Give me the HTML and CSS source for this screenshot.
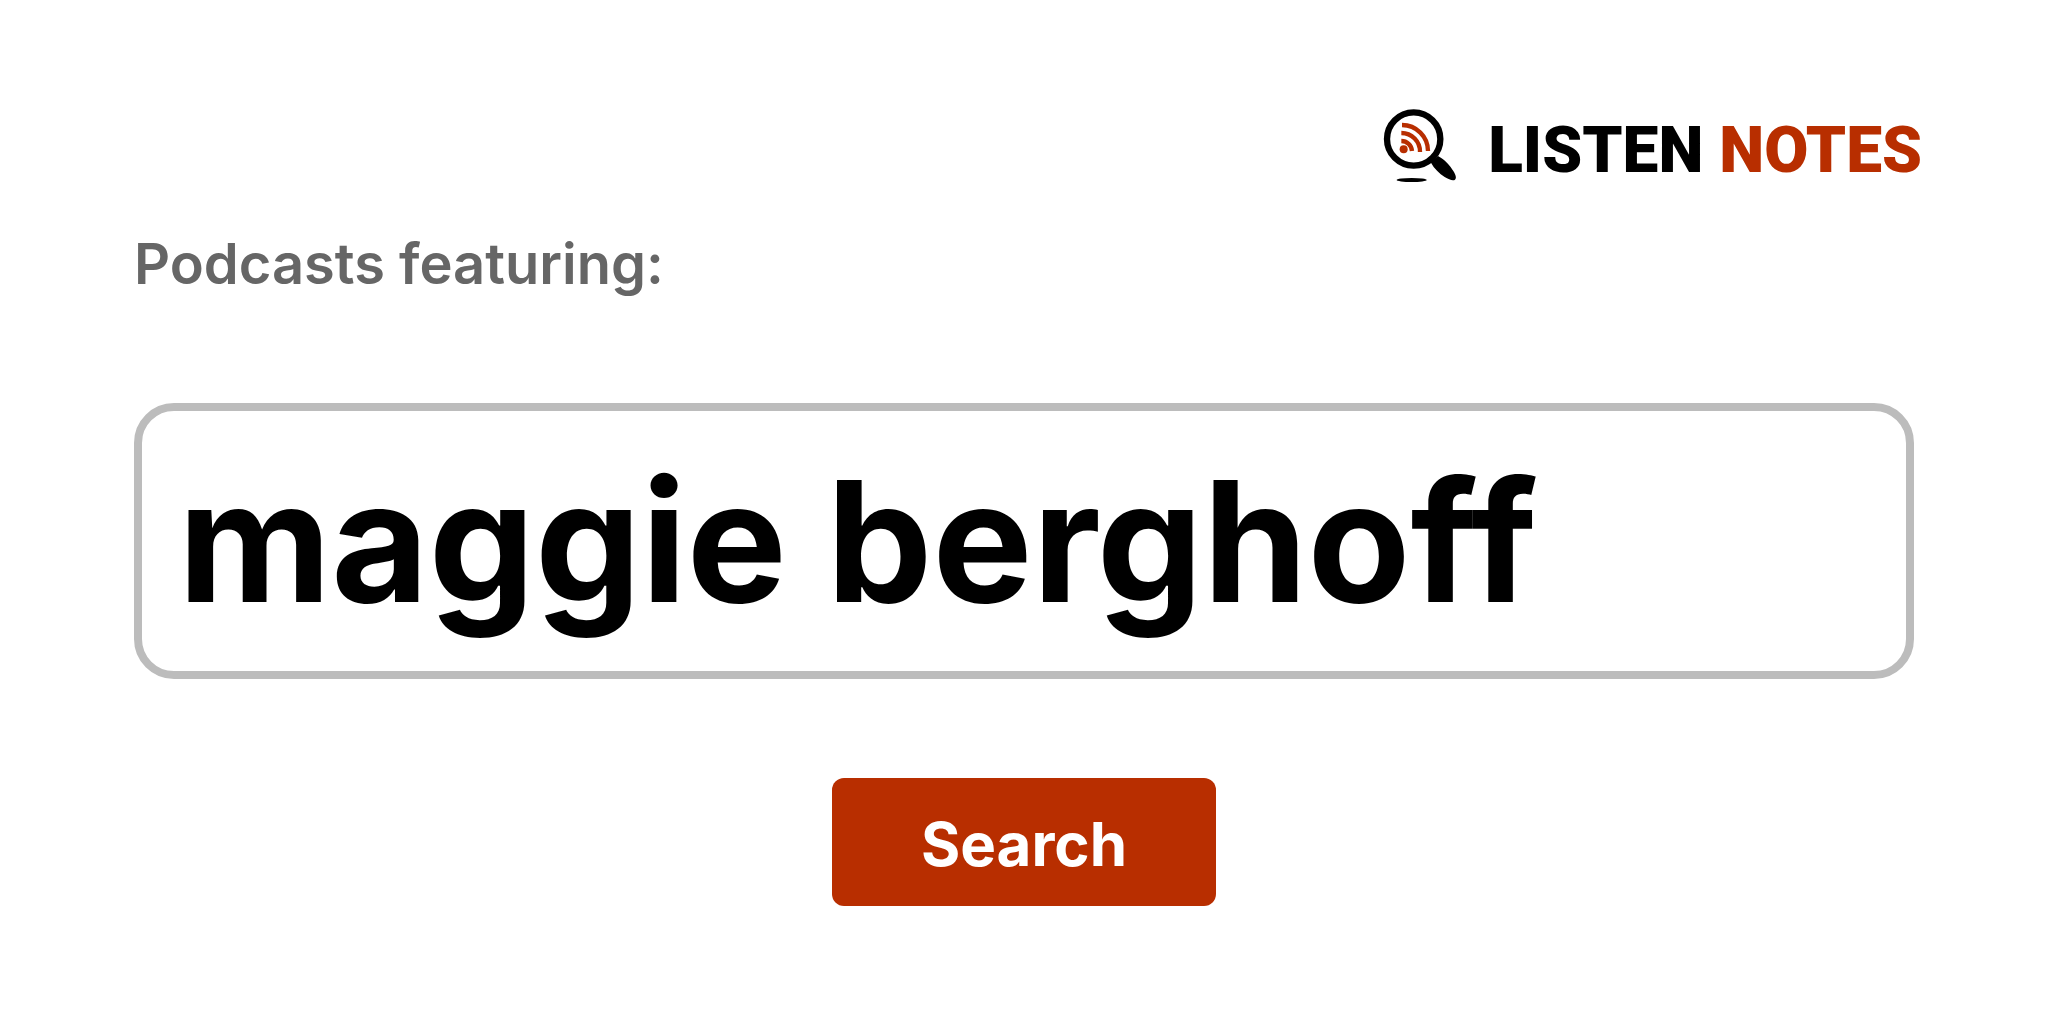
FILE: index.html
```html
<!DOCTYPE html>
<html lang="en">
<head>
  <meta charset="UTF-8">
  <meta name="viewport" content="width=device-width, initial-scale=1.0">
  <title>Listen Notes</title>
  <link rel="stylesheet" href="styles.css">
</head>
<body>
  <div class="page">
    <!-- Logo -->
    <header class="header">
      <a class="logo" href="#">
        <svg class="logo-icon" viewBox="36 36 228 228" aria-hidden="true">
          <circle cx="131" cy="132" r="80" fill="#fff" stroke="#000" stroke-width="19"/>
          <path d="M182 202L204 183C224 194 240 211 250 228C258 241 260 250 255 254C249 258 237 254 224 246C208 236 193 222 182 202Z" fill="#000"/>
          <ellipse cx="125" cy="255" rx="45" ry="6" fill="#000"/>
          <circle cx="101" cy="163" r="12" fill="#b82e00"/>
          <g fill="none" stroke="#b82e00" stroke-width="13">
            <path d="M94 138A32 32 0 0 1 126 168"/>
            <path d="M94 114A56 56 0 0 1 150 171"/>
            <path d="M96 90A78 78 0 0 1 174 168"/>
          </g>
        </svg>
        <span class="logo-text">LISTEN <span class="logo-accent">NOTES</span></span>
      </a>
    </header>

    <!-- Search Form -->
    <form class="search-form">
      <label class="search-label" for="search-input">Podcasts featuring:</label>
      <input class="search-input" id="search-input" type="text" value="maggie berghoff" spellcheck="false">
      <button class="search-button" type="button">Search</button>
    </form>
  </div>
</body>
</html>
```
FILE: styles.css
```css
* {
  margin: 0;
  padding: 0;
  box-sizing: border-box;
}

body {
  background-color: #fff;
  font-family: Inter, "Liberation Sans", Arial, sans-serif;
}

.page {
  padding-top: 107px;
}

/* Logo */
.header {
  display: flex;
  justify-content: flex-end;
  padding: 0 126px;
}

.logo {
  display: flex;
  align-items: flex-end;
  gap: 30px;
  color: #000;
  text-decoration: none;
}

.logo-icon {
  width: 76px;
  height: 76px;
}

.logo-text {
  font-family: Roboto, "Liberation Sans", sans-serif;
  font-size: 64px;
  font-weight: 900;
  line-height: 64px;
}

.logo-accent {
  color: #b82e00;
}

/* Search Form */
.search-form {
  display: flex;
  flex-direction: column;
  padding: 0 134px;
  margin-top: 47px;
}

.search-label {
  color: #666;
  font-size: 56px;
  font-weight: 600;
  line-height: 68px;
}

.search-input {
  width: 100%;
  height: 276px;
  margin-top: 105px;
  padding: 0 36px;
  border: 8px solid #bcbcbc;
  border-radius: 40px;
  background-color: #fff;
  color: #000;
  font-family: inherit;
  font-size: 168px;
  font-weight: 700;
  outline: none;
}

.search-button {
  align-self: center;
  width: 384px;
  height: 128px;
  margin-top: 99px;
  padding-top: 4px;
  border: none;
  border-radius: 12px;
  background-color: #b82e00;
  color: #fff;
  font-family: inherit;
  font-size: 60px;
  font-weight: 700;
  cursor: pointer;
}
```
